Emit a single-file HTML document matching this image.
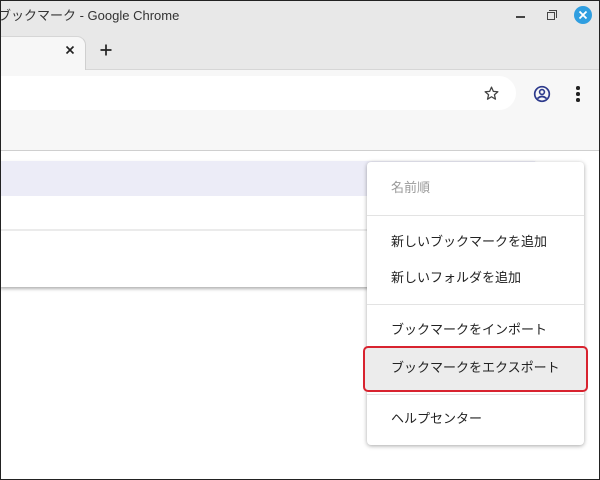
<!DOCTYPE html>
<html><head><meta charset="utf-8"><style>
*{margin:0;padding:0;box-sizing:border-box}
body{width:600px;height:480px;overflow:hidden;position:relative;background:#fff;font-family:"Liberation Sans","Noto Sans CJK JP",sans-serif}
.a{position:absolute}
#frame{left:0;top:0;width:600px;height:480px;border:1px solid #222;z-index:50;pointer-events:none}
.mi{position:absolute;left:24px;font-size:13px;color:#222;line-height:20px}
.sep{position:absolute;left:0;right:0;height:1px;background:#e3e3e3}
</style></head><body>
<div class="a" style="left:0;top:0;width:600px;height:70px;background:#e8e8e8"></div>
<div class="a" style="left:-2px;top:6px;font-size:13px;color:#333;line-height:20px">ブックマーク - Google Chrome</div>
<div class="a" style="left:516px;top:16px;width:9px;height:1.5px;background:#444"></div>
<div class="a" style="left:547px;top:12px;width:8px;height:8px;border:1.3px solid #444"></div>
<div class="a" style="left:549px;top:10px;width:8px;height:8px;border-top:1.3px solid #444;border-right:1.3px solid #444"></div>
<div class="a" style="left:574px;top:6px;width:18px;height:18px;border-radius:50%;background:#2f9ee0"></div>
<svg class="a" style="left:574px;top:6px" width="18" height="18"><path d="M5.5 5.5L12.5 12.5M12.5 5.5L5.5 12.5" stroke="#fff" stroke-width="1.8"/></svg>
<div class="a" style="left:-10px;top:36px;width:96px;height:36px;background:#f7f7f7;border-radius:0 9px 0 0;border-right:1px solid #cfcfcf;border-top:1px solid #d6d6d6"></div>
<svg class="a" style="left:64px;top:44px" width="12" height="12"><path d="M2.5 2.5L9.5 9.5M9.5 2.5L2.5 9.5" stroke="#222" stroke-width="1.6"/></svg>
<svg class="a" style="left:99px;top:43px" width="14" height="14"><path d="M7 1.5V12.5M1.5 7H12.5" stroke="#222" stroke-width="1.7"/></svg>
<div class="a" style="left:0;top:70px;width:600px;height:80px;background:#f7f7f7"></div>
<div class="a" style="left:86px;top:69px;width:514px;height:1px;background:#d6d6d6"></div>
<div class="a" style="left:-20px;top:76px;width:536px;height:34px;background:#fff;border-radius:17px"></div>
<svg class="a" style="left:483px;top:85px" width="17" height="17" viewBox="0 0 24 24"><path d="M12 3l2.6 6 6.4.5-4.9 4.2 1.5 6.3L12 16.6 6.4 20l1.5-6.3L3 9.5 9.4 9z" fill="none" stroke="#444" stroke-width="1.8" stroke-linejoin="round"/></svg>
<svg class="a" style="left:533px;top:85px" width="18" height="18" viewBox="0 0 18 18"><circle cx="9" cy="9" r="7.3" fill="none" stroke="#2d3a8c" stroke-width="1.7"/><circle cx="9" cy="7" r="2.4" fill="none" stroke="#2d3a8c" stroke-width="1.6"/><path d="M4.5 13.5Q9 9.5 13.5 13.5" fill="none" stroke="#2d3a8c" stroke-width="1.6"/></svg>
<div class="a" style="left:576px;top:86px;width:3.5px;height:3.5px;border-radius:50%;background:#222"></div>
<div class="a" style="left:576px;top:92px;width:3.5px;height:3.5px;border-radius:50%;background:#222"></div>
<div class="a" style="left:576px;top:98px;width:3.5px;height:3.5px;border-radius:50%;background:#222"></div>
<div class="a" style="left:0;top:150px;width:600px;height:1px;background:#cfcfcf"></div>
<div class="a" style="left:0;top:161px;width:535px;height:126px;background:#fff;box-shadow:0 2px 3px rgba(0,0,0,.3)"></div>
<div class="a" style="left:0;top:161px;width:535px;height:35px;background:#ececf7"></div>
<div class="a" style="left:0;top:229px;width:535px;height:2px;background:#ebebeb"></div>
<div class="a" style="left:367px;top:162px;width:217px;height:283px;background:#fff;border-radius:4px;box-shadow:0 1px 4px rgba(0,0,0,.35)">
<div class="mi" style="top:16px;color:#9a9a9a">名前順</div>
<div class="sep" style="top:53px"></div>
<div class="mi" style="top:70px">新しいブックマークを追加</div>
<div class="mi" style="top:106px">新しいフォルダを追加</div>
<div class="sep" style="top:142px"></div>
<div class="mi" style="top:158px">ブックマークをインポート</div>
<div class="a" style="left:-4px;top:184px;width:225px;height:46px;background:#ececec;border:2px solid #d8232f;border-radius:5px"></div>
<div class="mi" style="top:196px">ブックマークをエクスポート</div>
<div class="sep" style="top:232px"></div>
<div class="mi" style="top:247px">ヘルプセンター</div>
</div>
<div class="a" id="frame"></div>
</body></html>
